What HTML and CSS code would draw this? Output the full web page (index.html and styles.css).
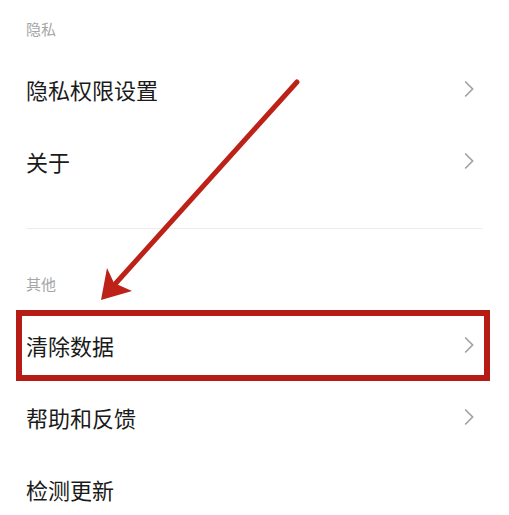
FILE: index.html
```html
<!DOCTYPE html>
<html lang="zh-CN">
<head>
<meta charset="utf-8">
<link rel="stylesheet" href="styles.css">
</head>
<body>
<div class="page">
  <div class="section-title first">隐私</div>
  <div class="row"><span class="label">隐私权限设置</span><svg class="chev" viewBox="0 0 10 18"><path d="M1.2 1.5 L8.6 9 L1.2 16.5"/></svg></div>
  <div class="row"><span class="label">关于</span><svg class="chev" viewBox="0 0 10 18"><path d="M1.2 1.5 L8.6 9 L1.2 16.5"/></svg></div>
  <div class="divider"></div>
  <div class="section-title second">其他</div>
  <div class="row highlighted"><span class="label">清除数据</span><svg class="chev" viewBox="0 0 10 18"><path d="M1.2 1.5 L8.6 9 L1.2 16.5"/></svg></div>
  <div class="row"><span class="label">帮助和反馈</span><svg class="chev" viewBox="0 0 10 18"><path d="M1.2 1.5 L8.6 9 L1.2 16.5"/></svg></div>
  <div class="row"><span class="label">检测更新</span></div>
  <svg class="arrow" viewBox="0 0 509 515" width="509" height="515">
    <line x1="297" y1="82" x2="116" y2="283" />
    <polygon points="101,300 107,268 114,283 132,291" />
  </svg>
</div>
</body>
</html>
```

FILE: styles.css
```css
html, body {
  margin: 0;
  padding: 0;
  background: #ffffff;
}
body {
  font-family: "Noto Sans CJK SC", "Noto Sans", sans-serif;
  overflow: hidden;
}
.page {
  position: relative;
  width: 509px;
  height: 515px;
  padding: 0 29px 0 26px;
  box-sizing: border-box;
}
.section-title {
  font-size: 15px;
  line-height: 18px;
  color: #a6a6a6;
}
.section-title.first {
  padding: 20px 0 15px;
}
.section-title.second {
  padding: 46px 0 16px;
}
.row {
  position: relative;
  height: 72px;
  display: flex;
  align-items: center;
  justify-content: space-between;
}
.label {
  font-size: 22px;
  color: #1a1a1a;
  line-height: 30px;
}
.chev {
  width: 10px;
  height: 18px;
  fill: none;
  stroke: #a3a3a3;
  stroke-width: 1.7;
  margin-right: 6px;
}
.divider {
  height: 1px;
  background: #ececec;
  margin-top: 31px;
  margin-right: -2px;
}
.highlighted::after {
  content: "";
  position: absolute;
  top: 1px;
  bottom: 0;
  left: -10px;
  right: -10px;
  border: 6px solid #b41c15;
}
.arrow {
  position: absolute;
  left: 0;
  top: 0;
  pointer-events: none;
}
.arrow line {
  stroke: #bc2217;
  stroke-width: 5;
  stroke-linecap: round;
}
.arrow polygon {
  fill: #bc2217;
}
```
